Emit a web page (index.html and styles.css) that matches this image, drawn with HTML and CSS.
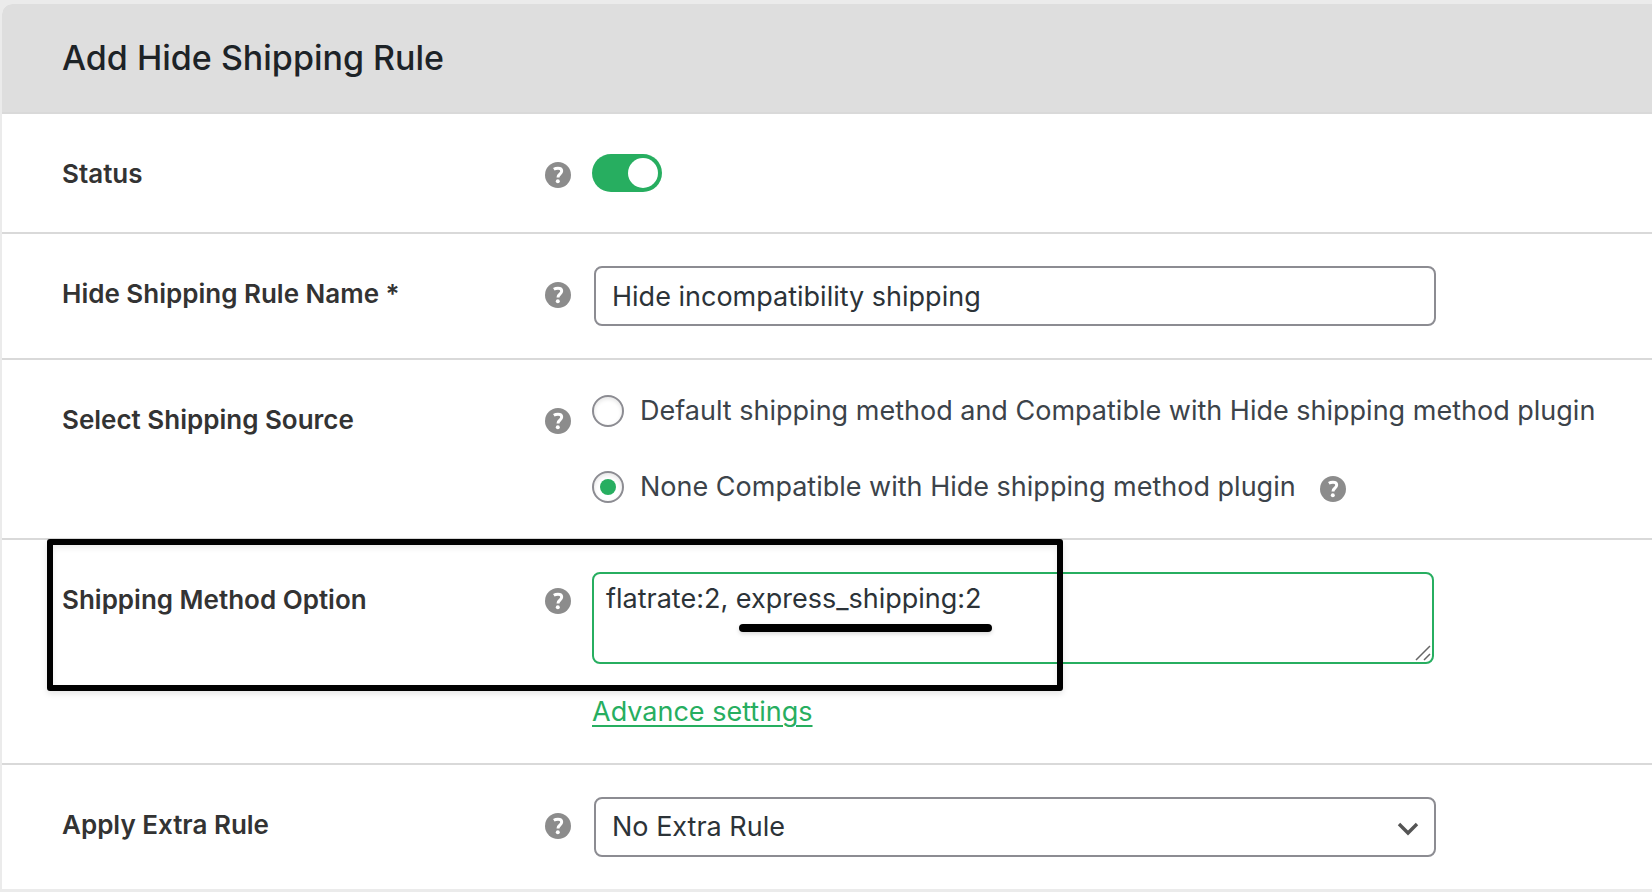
FILE: index.html
```html
<!DOCTYPE html>
<html lang="en">
<head>
<meta charset="UTF-8">
<meta name="viewport" content="width=device-width, initial-scale=1.0">
<title>Add Hide Shipping Rule</title>
<link rel="stylesheet" href="styles.css">
</head>
<body>
<svg class="defs" width="0" height="0" aria-hidden="true">
  <symbol id="help" viewBox="0 0 26 26">
    <circle cx="13" cy="13" r="13" fill="#8c8c8c"/>
    <path d="M8.8 7.2C10.2 6.4 11.6 6.2 13 6.2c2.3 0 3.7 1 3.7 2.9 0 1.5-.8 2.3-1.9 3.1-1.1.8-1.8 1.3-1.8 3.2" fill="none" stroke="#fff" stroke-width="3"/>
    <circle cx="12.8" cy="19.2" r="2" fill="#fff"/>
  </symbol>
</svg>
<form class="panel">
  <h1 class="panel-title">Add Hide Shipping Rule</h1>
  <div class="row row-status">
    <div class="label">
      <label for="status">Status</label>
      <svg class="help"><use href="#help"/></svg>
    </div>
    <div class="field">
      <input type="checkbox" class="toggle" id="status" checked>
    </div>
  </div>
  <div class="row">
    <div class="label">
      <label for="name">Hide Shipping Rule Name *</label>
      <svg class="help"><use href="#help"/></svg>
    </div>
    <div class="field">
      <input type="text" class="box" id="name" value="Hide incompatibility shipping">
    </div>
  </div>
  <div class="row" role="radiogroup" aria-labelledby="source-label">
    <div class="label">
      <span id="source-label">Select Shipping Source</span>
      <svg class="help"><use href="#help"/></svg>
    </div>
    <div class="field choices">
      <label class="choice"><input type="radio" name="source">Default shipping method and Compatible with Hide shipping method plugin</label>
      <div class="choice-line">
        <label class="choice"><input type="radio" name="source" checked>None Compatible with Hide shipping method plugin</label>
        <svg class="help"><use href="#help"/></svg>
      </div>
    </div>
  </div>
  <div class="row">
    <div class="label">
      <label for="method">Shipping Method Option</label>
      <svg class="help"><use href="#help"/></svg>
    </div>
    <div class="field">
      <div class="area-wrap">
        <textarea class="area" id="method" spellcheck="false">flatrate:2, express_shipping:2</textarea>
        <svg class="grip" viewBox="0 0 16 16"><path d="M1 15 15 1M9 15l6-6" fill="none" stroke="#666" stroke-width="1.5"/></svg>
        <span class="mark-line"></span>
      </div>
      <a class="more" href="#advance">Advance settings</a>
    </div>
    <div class="mark-box"></div>
  </div>
  <div class="row">
    <div class="label">
      <label for="extra">Apply Extra Rule</label>
      <svg class="help"><use href="#help"/></svg>
    </div>
    <div class="field">
      <div class="select-wrap">
        <select class="box" id="extra"><option>No Extra Rule</option></select>
        <svg class="arrow" viewBox="0 0 22 14"><path d="M2 2l9 9 9-9" fill="none" stroke="#555" stroke-width="3.4"/></svg>
      </div>
    </div>
  </div>
</form>
</body>
</html>
```
FILE: styles.css
```css
:root {
  --green: #27ae60;
  --line: #d9d9d9;
  --border: #8c8c92;
  --text: #2c3338;
}
* { box-sizing: border-box; }
body {
  margin: 0; padding: 4px 0 3px 2px; background: #ebebeb; color: var(--text);
  font: 27px/38px Inter, sans-serif; overflow-x: hidden;
}
.defs { position: absolute; }
.panel { background: #fff; border-top-left-radius: 10px; overflow: hidden; }
.panel-title {
  margin: 0; padding: 32px 60px; background: #dedede; color: #1d2327;
  font-size: 34px; line-height: 44px; font-weight: 500; border-bottom: 2px solid var(--line);
}
.row {
  position: relative; display: grid; grid-template-columns: 590px minmax(0, 1fr);
  padding: 32px 0; border-bottom: 2px solid var(--line);
}
.row:last-child { border-bottom: none; }
.row-status { padding: 40px 0; }
.row-status .label { padding-top: 2px; }
.label {
  display: flex; justify-content: space-between; align-items: flex-start;
  padding: 10px 21px 0 60px; color: #333; font-size: 26px; line-height: 36px; font-weight: 600;
}
.help { width: 26px; height: 26px; margin-top: 6px; flex: none; }
.field { padding-right: 20px; }

.toggle {
  appearance: none; display: block; width: 70px; height: 38px; margin: 0; padding: 4px;
  border-radius: 19px; background: #ccc; cursor: pointer;
}
.toggle::before { content: ""; display: block; width: 30px; height: 30px; border-radius: 50%; background: #fff; }
.toggle:checked { background: var(--green); }
.toggle:checked::before { margin-left: auto; }

.box {
  appearance: none; display: block; width: 100%; max-width: 842px; height: 60px; margin: 0 2px;
  padding: 0 16px; border: 2px solid var(--border); border-radius: 8px;
  background: #fff; color: var(--text); font: inherit;
}
.select-wrap { position: relative; max-width: 844px; }
.arrow { position: absolute; right: 17px; top: 25px; width: 22px; height: 14px; pointer-events: none; }

.choices { display: grid; gap: 38px; color: #3c434a; white-space: nowrap; }
.choice { display: flex; align-items: center; gap: 16px; }
.choice-line { display: flex; gap: 24px; }
.choice-line .help { margin-top: 8px; }
.choice input {
  appearance: none; display: grid; place-items: center; width: 32px; height: 32px; margin: 0;
  border: 2px solid var(--border); border-radius: 50%; background: #fff;
  box-shadow: inset 0 2px 4px rgba(0,0,0,0.1);
}
.choice input:checked::before { content: ""; width: 16px; height: 16px; border-radius: 50%; background: var(--green); }

.area-wrap { position: relative; max-width: 842px; }
.area {
  display: block; width: 100%; height: 92px; margin: 0; padding: 4px 12px; resize: none;
  border: 2px solid var(--green); border-radius: 8px; background: #fff; color: var(--text);
  font: inherit; line-height: 42px;
}
.grip { position: absolute; right: 3px; bottom: 3px; width: 16px; height: 16px; }
.more { display: block; width: fit-content; margin-top: 29px; color: var(--green); text-underline-offset: 4px; text-decoration-thickness: 2px; }

/* highlight marks over the shipping method row */
.mark-line {
  position: absolute; left: 147px; top: 52px; width: 253px; height: 8px;
  border-radius: 4px; background: #000; box-shadow: 0 2px 4px rgba(0,0,0,0.15);
}
.mark-box {
  position: absolute; left: 45px; top: -1px; width: 1016px; height: 152px; pointer-events: none;
  border: 6px solid #000; border-radius: 3px;
  box-shadow: 0 3px 6px rgba(0,0,0,0.1), inset 0 3px 6px rgba(0,0,0,0.08);
}
```
